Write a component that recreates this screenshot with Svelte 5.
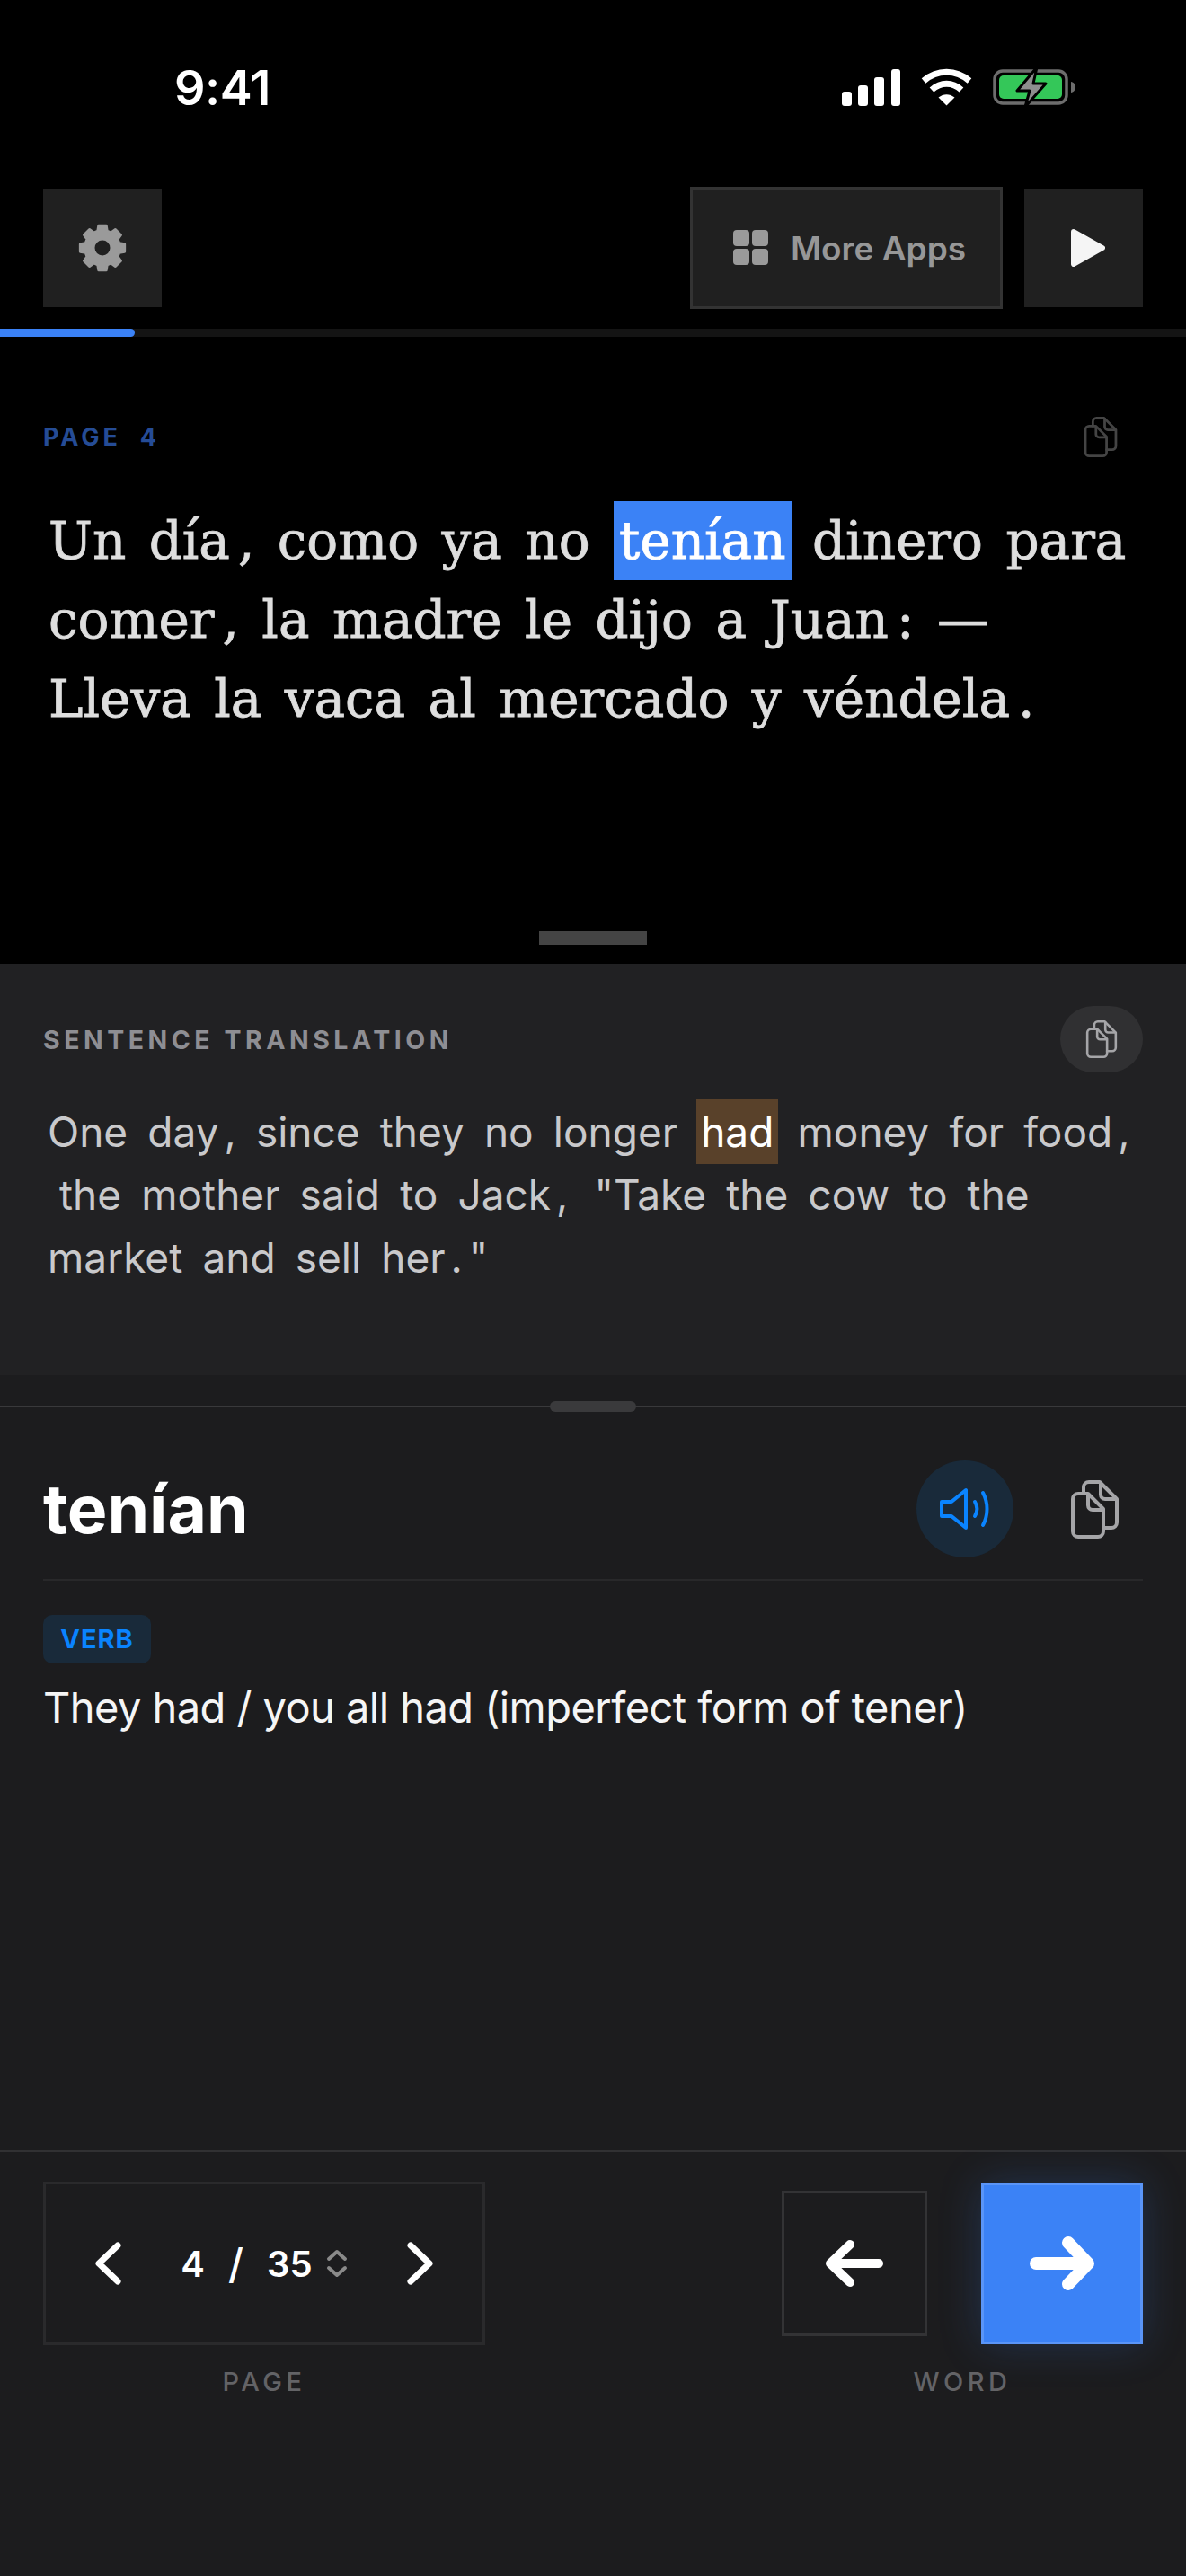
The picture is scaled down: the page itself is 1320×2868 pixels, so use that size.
<script>
  // gear outline: 8 teeth around the centre of a 60x60 box
  const gearPath = (() => {
    const pts = []
    for (let i = 0; i < 8; i++) {
      const a = (i * Math.PI) / 4 - Math.PI / 2
      for (const [off, r] of [[-0.27, 19.5], [-0.17, 25], [0.17, 25], [0.27, 19.5]]) {
        pts.push(`${(30 + r * Math.cos(a + off)).toFixed(2)} ${(30 + r * Math.sin(a + off)).toFixed(2)}`)
      }
    }
    return 'M' + pts.join('L') + 'Z'
  })()
</script>

{#snippet copyIcon(cls)}
  <svg class={cls} viewBox="0 0 53 65" fill="none" stroke="currentColor" stroke-width="4" stroke-linejoin="round" stroke-linecap="round">
    <path d="M14 15V8a6 6 0 0 1 6-6H32L51 21V47a6 6 0 0 1-6 6H36" />
    <path d="M33 3V16a5 5 0 0 0 5 5H50" />
    <path d="M8 15H19L36 32V57a6 6 0 0 1-6 6H8a6 6 0 0 1-6-6V21a6 6 0 0 1 6-6z" />
    <path d="M19 16V28a5 5 0 0 0 5 5H35" />
  </svg>
{/snippet}

<div class="screen">
  <header class="top">
    <div class="status">
      <span class="time">9:41</span>
      <div class="status-icons">
        <svg class="signal" viewBox="0 0 65 41" fill="#fff">
          <rect x="0" y="25" width="11" height="16" rx="3" />
          <rect x="18" y="18" width="11" height="23" rx="3" />
          <rect x="36" y="9" width="11" height="32" rx="3" />
          <rect x="55" y="0" width="10" height="41" rx="3" />
        </svg>
        <svg class="wifi" viewBox="0 0 57 42" fill="none" stroke="#fff" stroke-width="7">
          <path d="M3 14C18 1 39 1 54 14" />
          <path d="M12 24C22 15 35 15 45 24" />
          <path d="M19.500 32.500C25 28 32 28 37.500 32.500L28.500 41.500Z" fill="#fff" stroke="none" />
        </svg>
        <svg class="battery" viewBox="0 0 93 46">
          <rect x="2" y="5" width="80" height="36" rx="9" fill="none" stroke="#6d6d6d" stroke-width="3.500" />
          <rect x="7" y="10" width="70" height="26" rx="5" fill="#34c759" />
          <path d="M87 17c3 .5 5 3 5 6s-2 5.500-5 6z" fill="#6d6d6d" />
          <path d="M49 1L27 27H41L36 45L59 19H45Z" fill="#8e8e8e" stroke="#000" stroke-width="3" stroke-linejoin="round" />
        </svg>
      </div>
    </div>

    <div class="toolbar">
      <button class="tool square" aria-label="Settings">
        <svg class="gear" viewBox="0 0 60 60">
          <path d={gearPath} fill="#9a9a9a" stroke="#9a9a9a" stroke-width="3" stroke-linejoin="round" />
          <circle cx="30" cy="30" r="8.500" fill="#202020" />
        </svg>
      </button>
      <div class="tool-right">
        <button class="tool more">
          <svg class="apps" viewBox="0 0 40 40" fill="#9a9a9a">
            <rect x="0" y="0" width="18" height="18" rx="4" />
            <rect x="21" y="0" width="18" height="18" rx="4" />
            <rect x="0" y="21" width="18" height="18" rx="4" />
            <rect x="21" y="21" width="18" height="18" rx="4" />
          </svg>
          More Apps
        </button>
        <button class="tool square play-btn" aria-label="Play">
          <svg class="play" viewBox="0 0 38 42">
            <path d="M3 3L35 21L3 39Z" fill="#f5f5f5" stroke="#f5f5f5" stroke-width="6" stroke-linejoin="round" />
          </svg>
        </button>
      </div>
    </div>

    <div class="progress"><div class="progress-fill"></div></div>
  </header>

  <section class="reader">
    <div class="reader-head">
      <span class="page-tag">PAGE&nbsp; 4</span>
      {@render copyIcon('copy-dim')}
    </div>
    <p class="spanish">Un día<span class="p">,</span> como ya no <mark class="word-on">tenían</mark> dinero para<br />comer<span class="p">,</span> la madre le dijo a Juan<span class="p">:</span> —<br />Lleva la vaca al mercado y véndela<span class="p">.</span></p>
    <div class="grip"></div>
  </section>

  <section class="translation">
    <div class="trans-head">
      <span class="trans-label">SENTENCE TRANSLATION</span>
      <button class="copy-pill" aria-label="Copy translation">{@render copyIcon('copy-small')}</button>
    </div>
    <p class="english">One day<span class="p2">,</span> since they no longer <mark class="word-match">had</mark> money for food<span class="p2">,</span><br /><span class="indent">the mother said to Jack<span class="p2">,</span> <span class="q">"</span>Take the cow to the</span><br />market and sell her<span class="p2">.</span><span class="q">"</span></p>
  </section>

  <section class="word-panel">
    <div class="seam"><div class="seam-grip"></div></div>
    <div class="word-head">
      <h1>tenían</h1>
      <div class="word-actions">
        <button class="speak" aria-label="Listen">
          <svg viewBox="0 0 60 48" fill="none" stroke="#0a84ff" stroke-width="4" stroke-linecap="round" stroke-linejoin="round">
            <path d="M4 16H15L31 3V45L15 32H4Z" />
            <path d="M41 16C44 21 44 27 41 32" />
            <path d="M50 6C56 17 56 31 50 42" />
          </svg>
        </button>
        <button class="copy-btn" aria-label="Copy word">{@render copyIcon('copy-large')}</button>
      </div>
    </div>
    <div class="word-body">
      <span class="pos">VERB</span>
      <p class="meaning">They had / you all had (imperfect form of tener)</p>
    </div>
  </section>

  <footer class="controls">
    <div class="group">
      <div class="pager">
        <svg class="chev" viewBox="0 0 30 48" fill="none" stroke="#fff" stroke-width="7" stroke-linecap="round" stroke-linejoin="round"><path d="M26 4L5 24L26 44" /></svg>
        <div class="count">
          <span>4</span><span class="slash">/</span><span>35</span>
          <svg class="updown" viewBox="0 0 24 34" fill="none" stroke="#8a8a8a" stroke-width="4" stroke-linecap="round" stroke-linejoin="round">
            <path d="M3 12L12 4L21 12" /><path d="M3 22L12 30L21 22" />
          </svg>
        </div>
        <svg class="chev" viewBox="0 0 30 48" fill="none" stroke="#fff" stroke-width="7" stroke-linecap="round" stroke-linejoin="round"><path d="M4 4L25 24L4 44" /></svg>
      </div>
      <span class="cap">PAGE</span>
    </div>
    <div class="group">
      <div class="word-nav">
        <button class="nav back" aria-label="Previous word">
          <svg class="arrow-back" viewBox="0 0 64 52" fill="none" stroke="#fff" stroke-width="10" stroke-linecap="round" stroke-linejoin="round">
            <path d="M59 26H6" /><path d="M27 5L5 26L27 47" />
          </svg>
        </button>
        <button class="nav next" aria-label="Next word">
          <svg class="arrow-next" viewBox="0 0 72 60" fill="none" stroke="#fff" stroke-width="14" stroke-linecap="round" stroke-linejoin="round">
            <path d="M7 30H64" /><path d="M43 7L65 30L43 53" />
          </svg>
        </button>
      </div>
      <span class="cap">WORD</span>
    </div>
  </footer>
</div>

<style>
  :global(body) {
    margin: 0;
    background: #1c1c1e;
  }

  .screen {
    width: 1320px;
    height: 2868px;
    display: flex;
    flex-direction: column;
    overflow: hidden;
    font-family: Inter, "Noto Sans", sans-serif;
  }

  button {
    font-family: inherit;
    padding: 0;
    border: 0;
    background: none;
    color: inherit;
  }

  .top {
    background: #000;
    height: 375px;
    flex: none;
    display: flex;
    flex-direction: column;
  }

  .status {
    height: 208px;
    display: flex;
    justify-content: space-between;
    padding: 68px 122px 0 194px;
    box-sizing: border-box;
  }

  .time {
    font-size: 54px;
    font-weight: 600;
    line-height: 60px;
    color: #fff;
    letter-spacing: -0.5px;
  }

  .status-icons {
    display: flex;
    gap: 23px;
    height: 44px;
    margin-top: 7px;
    align-items: center;
  }

  .signal { width: 65px; height: 41px; }
  .wifi { width: 57px; height: 42px; }
  .battery { width: 93px; height: 46px; }

  .toolbar {
    height: 136px;
    display: flex;
    justify-content: space-between;
    align-items: center;
    padding: 0 48px;
  }

  .tool-right {
    display: flex;
    gap: 24px;
    align-items: center;
  }

  .tool {
    background: #202020;
    display: flex;
    align-items: center;
    justify-content: center;
  }

  .square {
    width: 132px;
    height: 132px;
  }

  .play-btn { padding-left: 10px; }

  .gear { width: 60px; height: 60px; }
  .play { width: 38px; height: 42px; }

  .more {
    width: 348px;
    height: 136px;
    box-sizing: border-box;
    border: 3px solid #333;
    padding-left: 7px;
    gap: 24px;
    color: #979797;
    font-size: 37px;
    font-weight: 600;
  }

  .apps { width: 40px; height: 40px; }

  .progress {
    margin-top: 22px;
    height: 9px;
    background: #141414;
  }

  .progress-fill {
    width: 150px;
    height: 100%;
    background: #3b82f6;
    border-radius: 0 5px 5px 0;
  }

  .reader {
    height: 698px;
    flex: none;
    background: #000;
    position: relative;
    box-sizing: border-box;
    padding: 88px 48px 0;
  }

  .reader-head {
    display: flex;
    justify-content: space-between;
    align-items: center;
    height: 46px;
    padding-right: 28px;
  }

  .page-tag {
    font-size: 27px;
    font-weight: 700;
    letter-spacing: 4px;
    color: #254c96;
  }

  .copy-dim {
    width: 38px;
    height: 45px;
    color: #444;
  }

  .spanish {
    margin: 49px 0 0;
    padding-left: 6px;
    width: 1230px;
    font-family: "DejaVu Serif", "Liberation Serif", serif;
    font-size: 58px;
    line-height: 88px;
    word-spacing: 7px;
    color: #dedede;
    white-space: nowrap;
    -webkit-text-stroke: 0.8px currentColor;
  }

  .p { margin-left: 9px; }

  .word-on {
    background: #3b82f6;
    color: #fff;
    padding: 10px 6px;
    margin: 0 -2px 0 1px;
  }

  .grip {
    position: absolute;
    left: 600px;
    top: 662px;
    width: 120px;
    height: 15px;
    background: #444;
  }

  .translation {
    height: 458px;
    flex: none;
    background: #212123;
    box-sizing: border-box;
    padding: 47px 48px 0;
  }

  .trans-head {
    display: flex;
    justify-content: space-between;
    align-items: center;
    height: 74px;
  }

  .trans-label {
    font-size: 28.500px;
    font-weight: 700;
    letter-spacing: 4.500px;
    color: #8e8e93;
  }

  .copy-pill {
    width: 92px;
    height: 74px;
    border-radius: 37px;
    background: #303032;
    display: flex;
    align-items: center;
    justify-content: center;
  }

  .copy-small {
    width: 36px;
    height: 42px;
    color: #a5a5a8;
  }

  .english {
    margin: 31px 0 0;
    padding-left: 5px;
    font-size: 46px;
    line-height: 70px;
    word-spacing: 9.200px;
    color: #c9c9cb;
    white-space: nowrap;
  }

  .p2 { margin-left: 6px; }
  .q { margin-left: 7px; }
  .indent { margin-left: 13px; }

  .word-match {
    background: #59412a;
    color: #fff;
    padding: 8px 5px;
    margin: 0 -1px;
  }

  .word-panel {
    height: 863px;
    flex: none;
    background: #1c1c1e;
    position: relative;
    box-sizing: border-box;
    padding: 95px 48px 0;
  }

  .seam {
    position: absolute;
    left: 0;
    right: 0;
    top: 34px;
    height: 2px;
    background: #39393b;
  }

  .seam-grip {
    position: absolute;
    left: 612px;
    top: -5px;
    width: 96px;
    height: 12px;
    border-radius: 6px;
    background: #3a3a3c;
  }

  .word-head {
    display: flex;
    justify-content: space-between;
    align-items: center;
    height: 108px;
    padding-bottom: 24px;
    border-bottom: 2px solid #28282a;
  }

  h1 {
    margin: 0;
    font-size: 75px;
    line-height: 108px;
    font-weight: 700;
    color: #fff;
  }

  .word-actions {
    display: flex;
    align-items: center;
    gap: 64px;
    padding-right: 27px;
  }

  .speak {
    width: 108px;
    height: 108px;
    border-radius: 50%;
    background: #192a3a;
    display: flex;
    align-items: center;
    justify-content: center;
  }

  .speak svg { width: 60px; height: 48px; }

  .copy-btn { display: flex; }

  .copy-large {
    width: 53px;
    height: 65px;
    color: #a5a5a8;
  }

  .word-body {
    padding-top: 38px;
  }

  .pos {
    display: inline-block;
    width: 120px;
    height: 54px;
    line-height: 54px;
    text-align: center;
    border-radius: 10px;
    background: #192a3a;
    color: #0a84ff;
    font-size: 29px;
    font-weight: 700;
    letter-spacing: 1px;
  }

  .meaning {
    margin: 19px 0 0;
    font-size: 47px;
    line-height: 60px;
    letter-spacing: -0.55px;
    color: #f5f5f5;
  }

  .controls {
    flex: 1;
    border-top: 2px solid #313133;
    background: #1c1c1e;
    display: flex;
    justify-content: space-between;
    padding: 33px 48px 0;
  }

  .group {
    display: flex;
    flex-direction: column;
    align-items: center;
    gap: 24px;
  }

  .pager {
    width: 492px;
    height: 182px;
    box-sizing: border-box;
    border: 3px solid #2a2a2c;
    display: flex;
    align-items: center;
    justify-content: space-between;
    padding: 0 54px;
  }

  .chev { width: 30px; height: 48px; }

  .count {
    display: flex;
    align-items: center;
    color: #fff;
    font-size: 40px;
    font-weight: 600;
    gap: 26px;
  }

  .slash { font-weight: 500; font-size: 46px; }

  .updown {
    width: 24px;
    height: 34px;
    margin-left: -11px;
  }

  .word-nav {
    display: flex;
    align-items: center;
    gap: 60px;
    height: 182px;
  }

  .nav {
    display: flex;
    align-items: center;
    justify-content: center;
    box-sizing: border-box;
  }

  .back {
    width: 162px;
    height: 162px;
    border: 3px solid #333335;
  }

  .next {
    width: 180px;
    height: 180px;
    background: #3b82f6;
    border: 3px solid #5a95f8;
    box-shadow: 0 0 44px rgba(59, 130, 246, 0.22);
  }

  .arrow-back { width: 64px; height: 52px; }
  .arrow-next { width: 72px; height: 60px; }

  .cap {
    font-size: 29px;
    font-weight: 500;
    letter-spacing: 4.500px;
    line-height: 34px;
    color: #636366;
  }
</style>
